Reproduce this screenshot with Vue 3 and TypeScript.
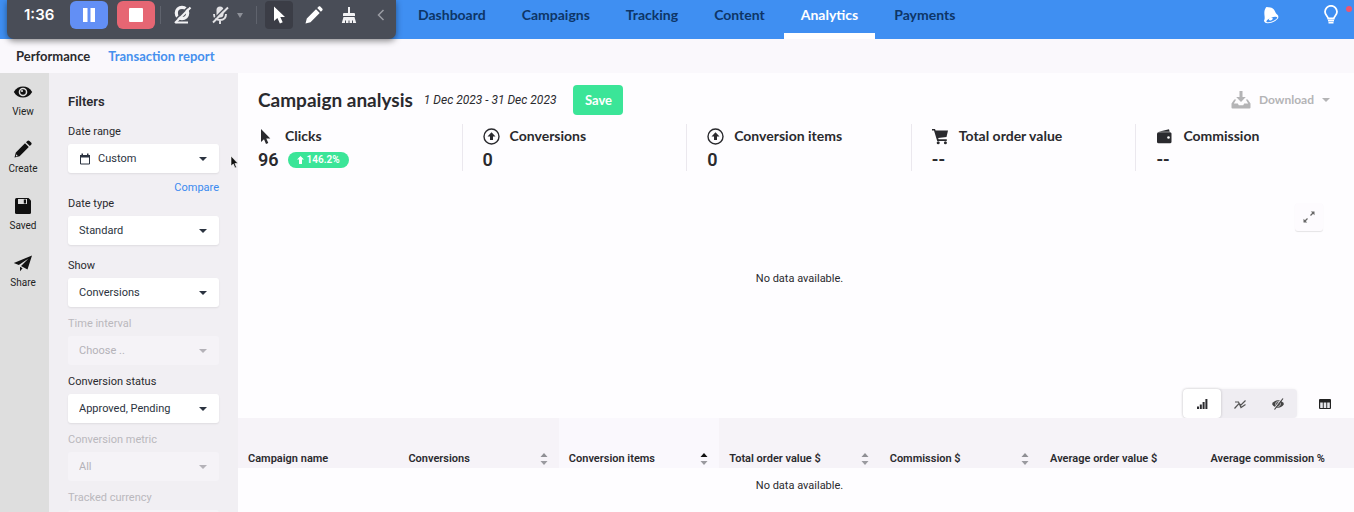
<script setup lang="ts">
import { ref } from 'vue'

interface Filter {
  id: string
  label: string
  value: string
  disabled?: boolean
  calendar?: boolean
  compare?: boolean
  roomy?: boolean
}

const navItems = ['Dashboard', 'Campaigns', 'Tracking', 'Content', 'Analytics', 'Payments']
const activeNav = 'Analytics'

const railItems = [
  { label: 'View', icon: 'eye' },
  { label: 'Create', icon: 'pencil' },
  { label: 'Saved', icon: 'disk' },
  { label: 'Share', icon: 'plane' },
]

const filters: Filter[] = [
  { id: 'date-range', label: 'Date range', value: 'Custom', calendar: true, compare: true },
  { id: 'date-type', label: 'Date type', value: 'Standard', roomy: true },
  { id: 'show', label: 'Show', value: 'Conversions' },
  { id: 'interval', label: 'Time interval', value: 'Choose ..', disabled: true },
  { id: 'status', label: 'Conversion status', value: 'Approved, Pending' },
  { id: 'metric', label: 'Conversion metric', value: 'All', disabled: true },
  { id: 'currency', label: 'Tracked currency', value: 'All', disabled: true },
]

const stats = [
  { label: 'Clicks', value: '96', change: '146.2%', icon: 'cursor' },
  { label: 'Conversions', value: '0', icon: 'up' },
  { label: 'Conversion items', value: '0', icon: 'up' },
  { label: 'Total order value', value: '--', icon: 'cart' },
  { label: 'Commission', value: '--', icon: 'wallet' },
]

const columns = [
  { label: 'Campaign name' },
  { label: 'Conversions', sortable: true },
  { label: 'Conversion items', sortable: true, sorted: true },
  { label: 'Total order value $', sortable: true },
  { label: 'Commission $', sortable: true },
  { label: 'Average order value $' },
  { label: 'Average commission %' },
]

const chartModes = ['bars', 'lines', 'hidden']
const chartMode = ref('bars')
</script>

<template>
  <div class="app">
    <header class="topbar">
      <nav class="nav" aria-label="Main">
        <a
          v-for="item in navItems"
          :key="item"
          href="#"
          class="nav-link"
          :class="{ active: item === activeNav }"
        >{{ item }}</a>
      </nav>
      <div class="top-actions">
        <button type="button" class="plain" aria-label="Notifications">
          <svg width="18" height="18" viewBox="0 0 18 18">
            <path d="M3.500 2.200C4 .8 5 .6 5.800 1.300c3-.4 5.700 1 7 3.800.8 1.800 1.600 3.200 3.600 4.400L2 15.200c.9-2 .7-3.700.5-5.700-.3-2.700-.3-5 1-7.300z" fill="#fff" />
            <ellipse cx="9.300" cy="13" rx="7.500" ry="3.600" transform="rotate(-22 9.300 13)" fill="#fff" />
            <ellipse cx="9.800" cy="13.500" rx="5.800" ry="1.900" transform="rotate(-22 9.800 13.500)" fill="#3f8ff2" />
            <ellipse cx="8.800" cy="13" rx="2" ry="1.300" transform="rotate(-22 8.800 13)" fill="#fff" />
          </svg>
        </button>
        <button type="button" class="plain tips" aria-label="Tips">
          <svg width="16" height="20" viewBox="0 0 16 20">
            <path d="M5.200 13.500C5 11.400 2 10 2 6.800a6 6 0 0 1 12 0c0 3.200-3 4.600-3.200 6.700z" fill="none" stroke="#fff" stroke-width="1.800" />
            <path d="M5 15.600h6M5.500 17.800h5" stroke="#fff" stroke-width="1.600" />
          </svg>
          <span class="dot"></span>
        </button>
      </div>
    </header>

    <nav class="subnav" aria-label="Reports">
      <a href="#" class="sub-link">Performance</a>
      <a href="#" class="sub-link current">Transaction report</a>
    </nav>

    <div class="body">
      <aside class="rail">
        <button v-for="item in railItems" :key="item.label" type="button" class="rail-item">
          <svg width="20" height="20" viewBox="0 0 20 20">
            <template v-if="item.icon === 'eye'">
              <path d="M.8 10C3 6.300 6.300 4.500 10 4.500S17 6.300 19.200 10C17 13.700 13.700 15.500 10 15.500S3 13.700.8 10z" fill="#111" />
              <circle cx="10" cy="10" r="4.300" fill="#dedede" />
              <circle cx="10" cy="10" r="2.800" fill="#111" />
              <circle cx="9" cy="9" r="1.100" fill="#dedede" />
            </template>
            <template v-else-if="item.icon === 'pencil'">
              <path d="M1.500 18.500l1.300-5.100L12 4.200l3.800 3.800-9.200 9.200zM13 3.200l1.300-1.300c.7-.7 1.500-.7 2.200 0l1.600 1.600c.7.7.7 1.500 0 2.200L16.800 7z" fill="#111" />
              <path d="M3.200 15.300l1.600 1.600-2 .6z" fill="#dedede" />
            </template>
            <template v-else-if="item.icon === 'disk'">
              <path d="M3.500 2h12L18 4.500v12a1.500 1.500 0 0 1-1.500 1.500h-13A1.500 1.500 0 0 1 2 16.500v-13A1.500 1.500 0 0 1 3.500 2z" fill="#111" />
              <path d="M5 3h9v5H5z" fill="#dedede" />
              <path d="M10.800 3.500h2.200v4h-2.200z" fill="#111" />
            </template>
            <template v-else>
              <path d="M19 2.500L.8 10l5 2.100L15.500 5.500 8 13l6.500 3.500zM7 13.800v4.400l2.600-3z" fill="#111" />
            </template>
          </svg>
          <span>{{ item.label }}</span>
        </button>
      </aside>

      <form class="filters" @submit.prevent>
        <h2 class="filters-title">Filters</h2>
        <div
          v-for="f in filters"
          :key="f.id"
          class="field"
          :class="{ disabled: f.disabled, roomy: f.roomy, comparable: f.compare }"
        >
          <label :for="f.id">{{ f.label }}</label>
          <div class="select">
            <svg v-if="f.calendar" class="calendar" width="12" height="12" viewBox="0 0 12 12">
              <path d="M1.500 2.500h9v8.500h-9z" fill="none" stroke="#2b3340" />
              <path d="M1 2h10v2.500H1zM2.500.5h1.500v2H2.500zM8 .5h1.500v2H8z" fill="#2b3340" />
            </svg>
            <select :id="f.id" :disabled="f.disabled" :class="{ indented: f.calendar }">
              <option>{{ f.value }}</option>
            </select>
            <span class="caret"></span>
          </div>
          <a v-if="f.compare" href="#" class="compare">Compare</a>
        </div>
      </form>

      <main class="main">
        <div class="title-row">
          <h1>Campaign analysis</h1>
          <span class="dates">1 Dec 2023 - 31 Dec 2023</span>
          <button type="button" class="save">Save</button>
          <button type="button" class="download">
            <svg width="20" height="18" viewBox="0 0 20 18" fill="#b4b4b6">
              <path d="M8.500 0h3v6h3.300L10 11 5.200 6h3.300z" />
              <path d="M3.300 8.500h1.900L2.800 12.500h4l1 1.700h4.400l1-1.700h4L14.800 8.500h1.900l2.800 4v4a1 1 0 0 1-1 1h-17a1 1 0 0 1-1-1v-4z" />
            </svg>
            <span>Download</span>
            <span class="caret"></span>
          </button>
        </div>

        <div class="stats">
          <section v-for="s in stats" :key="s.label" class="stat">
            <div class="stat-head">
              <svg width="17" height="18" viewBox="0 0 17 18">
                <path v-if="s.icon === 'cursor'" d="M3 2v13l3-2.800 2 4.800 2.300-1-2-4.500h4z" fill="#2a2a2e" />
                <template v-else-if="s.icon === 'up'">
                  <circle cx="8.500" cy="9.500" r="7.500" fill="none" stroke="#2a2a2e" stroke-width="1.400" />
                  <path d="M8.500 5.300l4 4.200H10v3.500H7V9.500H4.500z" fill="#2a2a2e" />
                </template>
                <template v-else-if="s.icon === 'cart'">
                  <path d="M0 2h3l.6 1.600H16L14.500 10l-8.300 1 .4 1.300h8.200V14H5.200L2 3.600H0z" fill="#2a2a2e" />
                  <circle cx="6.200" cy="15.800" r="1.500" fill="#2a2a2e" />
                  <circle cx="13.400" cy="15.800" r="1.500" fill="#2a2a2e" />
                </template>
                <template v-else>
                  <path d="M2.500 4.700L13 2.200l.7 2.500z" fill="#2a2a2e" />
                  <rect x="1" y="5.300" width="14.500" height="11" rx="1.500" fill="#2a2a2e" />
                  <circle cx="12.500" cy="10.500" r="1.300" fill="#fff" />
                </template>
              </svg>
              <h3>{{ s.label }}</h3>
            </div>
            <div class="stat-value">
              <strong>{{ s.value }}</strong>
              <span v-if="s.change" class="badge">
                <svg width="7" height="8" viewBox="0 0 7 8"><path d="M3.500 0L7 3.500H5V8H2V3.500H0z" fill="#fff" /></svg>
                {{ s.change }}
              </span>
            </div>
          </section>
        </div>

        <section class="chart">
          <button type="button" class="expand" aria-label="Expand chart">
            <svg width="14" height="14" viewBox="0 0 14 14" stroke="#666" fill="#666" stroke-width="1.300">
              <path d="M8.500 5.500L11 3M5.500 8.500L3 11" />
              <path d="M8.800 1.500h3.700v3.700zM5.200 12.500H1.500V8.800z" stroke="none" />
            </svg>
          </button>
          <p class="no-data">No data available.</p>
          <div class="views">
            <div class="segment" role="group" aria-label="Chart type">
              <button
                v-for="mode in chartModes"
                :key="mode"
                type="button"
                :aria-label="mode"
                :class="{ on: chartMode === mode }"
                @click="chartMode = mode"
              >
                <svg width="14" height="14" viewBox="0 0 14 14">
                  <path v-if="mode === 'bars'" d="M2 9.500h2V12H2zM4.800 7.500h2V12h-2zM7.600 5h2v7h-2zM10.400 2h2v10h-2z" fill="#2a2a2e" />
                  <path v-else-if="mode === 'lines'" d="M1.500 11.500L6 6.500l2 1.500 4.500-4.500M2 5h3.500L8 10.500l4.500-3" fill="none" stroke="#555" stroke-width="1.200" />
                  <template v-else>
                    <path d="M1 7c1.500-2.500 3.600-3.700 6-3.700S11.500 4.500 13 7c-1.500 2.500-3.600 3.700-6 3.700S2.500 9.500 1 7z" fill="#444" />
                    <circle cx="7" cy="7" r="2.400" fill="none" stroke="#efedf2" stroke-width=".7" />
                    <path d="M2.500 12.500L11 1.500" stroke="#efedf2" stroke-width="1.200" />
                    <path d="M3.500 12.500L12 1.500" stroke="#444" stroke-width="1.200" />
                  </template>
                </svg>
              </button>
            </div>
            <button type="button" class="table-toggle" aria-label="Table settings">
              <svg width="14" height="12" viewBox="0 0 14 12">
                <rect x="1" y="1" width="12" height="10" rx="1" fill="#222" />
                <path d="M2.200 4.500h2.600V10H2.200zM5.700 4.500h2.600V10H5.700zM9.200 4.500h2.600V10H9.200z" fill="#e8e8ec" />
              </svg>
            </button>
          </div>
        </section>

        <table class="report">
          <thead>
            <tr>
              <th v-for="c in columns" :key="c.label" scope="col" :class="{ sorted: c.sorted }">
                <div class="th">
                  <span>{{ c.label }}</span>
                  <svg v-if="c.sortable" width="8" height="12" viewBox="0 0 8 12">
                    <path d="M4 0l3.500 4h-7z" :fill="c.sorted ? '#111' : '#8f8f94'" />
                    <path d="M4 12L.5 8h7z" fill="#9a9a9f" />
                  </svg>
                </div>
              </th>
            </tr>
          </thead>
          <tbody>
            <tr>
              <td :colspan="columns.length">No data available.</td>
            </tr>
          </tbody>
        </table>
      </main>
    </div>

    <div class="recorder" role="toolbar" aria-label="Recording">
      <span class="time">1:36</span>
      <button type="button" class="rec pause" aria-label="Pause">
        <svg width="14" height="14" viewBox="0 0 14 14"><path d="M1 0h4.500v14H1zM8.500 0H13v14H8.500z" fill="#fff" /></svg>
      </button>
      <button type="button" class="rec stop" aria-label="Stop">
        <svg width="14" height="14" viewBox="0 0 14 14"><rect width="14" height="14" rx="1" fill="#fff" /></svg>
      </button>
      <span class="rule first"></span>
      <button type="button" class="tool" aria-label="Camera off">
        <svg width="20" height="20" viewBox="0 0 20 20" fill="none" stroke="#f2f2f4">
          <circle cx="10" cy="8" r="5.700" stroke-width="3.200" />
          <path d="M4 17.500h12" stroke-width="2" />
          <path d="M1.500 16.500l15-15" stroke="#494d57" stroke-width="1.600" />
          <path d="M3 18L18.500 2.500" stroke-width="2.200" />
        </svg>
      </button>
      <button type="button" class="tool mic" aria-label="Microphone off">
        <svg width="20" height="20" viewBox="0 0 20 20" fill="none" stroke="#e2e2e5">
          <rect x="6.500" y="1.500" width="7" height="11" rx="3.500" fill="#e2e2e5" stroke="none" />
          <path d="M4 9c0 4 2.500 6 6 6s6-2 6-6M10 15v4" stroke-width="1.900" />
          <path d="M2 16L16.500 1.500" stroke="#494d57" stroke-width="1.600" />
          <path d="M3 17.500L18 2.500" stroke-width="1.900" />
        </svg>
      </button>
      <span class="caret mic-caret"></span>
      <span class="rule second"></span>
      <button type="button" class="tool pointer" aria-label="Pointer">
        <svg width="18" height="20" viewBox="0 0 18 20"><path d="M4 1.500v14.500l3.400-3 2.500 5.500 2.800-1.200-2.400-5.400H15z" fill="#fff" /></svg>
      </button>
      <button type="button" class="tool" aria-label="Draw">
        <svg width="20" height="20" viewBox="0 0 20 20"><path d="M1.500 18.500l1.300-5L12 4.300l3.700 3.700-9.200 9.200zM13.200 3.100l1.300-1.300c.6-.6 1.400-.6 2 0l1.700 1.700c.6.6.6 1.400 0 2l-1.300 1.300z" fill="#fff" /></svg>
      </button>
      <button type="button" class="tool" aria-label="Clear">
        <svg width="16" height="20" viewBox="0 0 16 20" fill="#f2f2f4">
          <path d="M7 2h2v6h4a1 1 0 0 1 1 1v2H2V9a1 1 0 0 1 1-1h4z" />
          <path d="M2.500 12h11l1.700 6H.8z" />
          <path d="M4.500 18.500v-3M8 18.500v-3M11.500 18.500v-3" stroke="#494d57" />
        </svg>
      </button>
      <button type="button" class="tool collapse" aria-label="Collapse">
        <svg width="8" height="12" viewBox="0 0 8 12"><path d="M6.500 1L1.500 6l5 5" fill="none" stroke="#9b9da4" stroke-width="1.500" /></svg>
      </button>
    </div>

    <svg class="mouse" width="9" height="14" viewBox="0 0 9 14">
      <path d="M1 1v10l2.300-2 1.700 4 1.500-.7-1.600-3.800H8z" fill="#111" stroke="#fff" stroke-width=".6" />
    </svg>
  </div>
</template>

<style>
body {
  margin: 0;
  overflow: hidden;
}
</style>

<style scoped>
.app {
  position: relative;
  display: flex;
  flex-direction: column;
  height: 100vh;
  overflow: hidden;
  background: #fefdff;
  color: #2a2a2e;
  font-family: Roboto, "Liberation Sans", sans-serif;
  font-size: 11px;
  line-height: 16px;
  white-space: nowrap;
}

button {
  display: flex;
  align-items: center;
  justify-content: center;
  padding: 0;
  border: 0;
  background: none;
  color: inherit;
  font: inherit;
}

svg {
  flex: none;
}

a {
  text-decoration: none;
}

h1,
h2,
h3,
p {
  margin: 0;
}

.caret {
  width: 0;
  height: 0;
  border: 4px solid transparent;
  border-width: 4px 4px 0;
  border-top-color: currentColor;
}

.topbar {
  display: flex;
  flex: none;
  justify-content: space-between;
  height: 39px;
  padding: 0 15px 0 401px;
  background: #3f8ff2;
}

.nav {
  display: flex;
  gap: 2px;
}

.nav-link {
  padding: 7px 17px 10px;
  border-bottom: 6px solid transparent;
  color: #0d3567;
  font-family: Lato, sans-serif;
  font-size: 14px;
  font-weight: 700;
}

.nav-link.active {
  border-color: #fff;
  color: #fff;
}

.top-actions {
  display: flex;
  gap: 43px;
  height: 29px;
}

.tips {
  position: relative;
}

.dot {
  position: absolute;
  top: 6px;
  right: -13px;
  width: 6px;
  height: 6px;
  border-radius: 50%;
  background: #ee5570;
}

.subnav {
  display: flex;
  flex: none;
  gap: 18px;
  align-items: center;
  height: 34px;
  padding-left: 16px;
  background: #faf8fc;
}

.sub-link {
  color: #2a2a2e;
  font-family: Lato, sans-serif;
  font-size: 13px;
  font-weight: 700;
}

.sub-link.current {
  color: #4690ee;
}

.body {
  display: flex;
  flex: 1;
  min-height: 0;
}

.rail {
  display: flex;
  flex: none;
  flex-direction: column;
  gap: 20px;
  width: 49px;
  padding-top: 9px;
  background: #dedede;
}

.rail-item {
  flex-direction: column;
  gap: 3px;
  width: 46px;
  color: #222;
  font-size: 10px;
  line-height: 14px;
}

.filters {
  box-sizing: border-box;
  flex: none;
  width: 189px;
  padding: 21px 19px 0;
  overflow: hidden;
  background: #f1eff3;
}

.filters-title {
  margin-bottom: 14px;
  font-size: 13px;
  font-weight: 600;
}

.field {
  margin-bottom: 9px;
}

.field.comparable {
  margin-bottom: 0;
}

.field.roomy {
  margin-bottom: 13px;
}

.field label {
  display: block;
  margin-bottom: 4px;
}

.select {
  display: grid;
  align-items: center;
  border-radius: 3px;
  background: #fff;
  box-shadow: 0 1px 2px rgba(0, 0, 0, 0.08);
  color: #2b3340;
}

.select > * {
  grid-area: 1 / 1;
}

.select select {
  width: 100%;
  height: 29px;
  padding: 0 28px 0 11px;
  border: 0;
  background: none;
  color: inherit;
  font: inherit;
  opacity: 1;
  appearance: none;
}

.select select.indented {
  padding-left: 30px;
}

.select .calendar {
  margin-left: 11px;
}

.select .caret {
  justify-self: end;
  margin-right: 12px;
  pointer-events: none;
}

.field.disabled {
  color: #bab8bd;
}

.field.disabled .select {
  background: #f5f3f7;
  box-shadow: none;
  color: #b4b2b8;
}

.compare {
  display: block;
  margin-top: 7px;
  color: #3a8af0;
  text-align: right;
}

.main {
  display: flex;
  flex: 1;
  flex-direction: column;
  min-width: 0;
  margin-right: -7px;
}

.title-row {
  display: flex;
  align-items: center;
  padding: 12px 31px 0 20px;
}

.title-row h1 {
  font-family: Lato, sans-serif;
  font-size: 19px;
  font-weight: 700;
  line-height: 24px;
}

.dates {
  margin: 0 17px 0 11px;
  font-size: 12px;
  font-style: italic;
}

.save {
  width: 50px;
  height: 30px;
  border-radius: 4px;
  background: #3be598;
  color: #fff;
  font-family: Lato, sans-serif;
  font-size: 13px;
  font-weight: 700;
}

.download {
  gap: 8px;
  margin-left: auto;
  color: #b4b4b6;
  font-family: Lato, sans-serif;
  font-size: 12px;
  font-weight: 700;
}

.stats {
  display: grid;
  grid-template-columns: repeat(5, 1fr);
  margin-top: 9px;
}

.stat {
  height: 47px;
  padding-left: 20px;
  border-right: 1px solid #ebe8ee;
}

.stat-head {
  display: flex;
  gap: 10px;
  align-items: center;
  height: 24px;
}

.stat-head h3 {
  font-family: Lato, sans-serif;
  font-size: 14px;
  font-weight: 700;
}

.stat-value {
  display: flex;
  gap: 9px;
  align-items: center;
  height: 24px;
}

.stat-value strong {
  font-size: 18px;
  font-weight: 600;
}

.badge {
  display: flex;
  gap: 3px;
  align-items: center;
  padding: 0 9px;
  border-radius: 8px;
  background: #3be598;
  color: #fff;
  font-size: 10px;
  font-weight: 600;
}

.chart {
  display: flex;
  flex-direction: column;
  padding-top: 32px;
}

.expand {
  align-self: flex-end;
  width: 28px;
  height: 28px;
  margin-right: 38px;
  border-radius: 3px;
  background: #fdfbfe;
  box-shadow: 0 1px 1px rgba(0, 0, 0, 0.1);
}

.no-data {
  margin: 40px 0 102px;
  text-align: center;
}

.views {
  display: flex;
  gap: 14px;
  align-self: flex-end;
  margin-right: 22px;
}

.segment {
  display: flex;
  border-radius: 4px;
  background: #efedf2;
  box-shadow: 0 0 3px rgba(0, 0, 0, 0.06);
}

.segment button {
  width: 38px;
  height: 29px;
  border-radius: 4px;
}

.segment button.on {
  background: #fff;
  box-shadow: 0 0 3px rgba(0, 0, 0, 0.2);
}

.table-toggle {
  width: 28px;
  height: 29px;
}

.report {
  width: 100%;
  border-collapse: collapse;
  table-layout: fixed;
}

.report th {
  height: 49px;
  padding: 0 11px 1px 10px;
  background: #f6f3f8;
  font-size: 11px;
  font-weight: 600;
  text-align: left;
  vertical-align: bottom;
}

.report th.sorted {
  background: #faf8fd;
}

.th {
  display: flex;
  align-items: center;
  justify-content: space-between;
}

.report td {
  height: 36px;
  padding: 0;
  text-align: center;
}

.recorder {
  position: absolute;
  top: 0;
  left: 7px;
  display: flex;
  align-items: center;
  box-sizing: border-box;
  height: 39px;
  padding: 0 7px 9px 17px;
  border-radius: 0 0 7px 7px;
  background: #494d57;
  box-shadow: 0 2px 6px rgba(0, 0, 0, 0.45);
}

.time {
  width: 46px;
  color: #fff;
  font-family: Inter, sans-serif;
  font-size: 15px;
  font-weight: 600;
}

.rec {
  width: 38px;
  height: 28px;
  margin-right: 9px;
  border-radius: 6px;
}

.pause {
  background: #628ff5;
}

.stop {
  margin-right: 5px;
  background: #e66673;
}

.rule {
  width: 1px;
  height: 18px;
  background: #5f636d;
}

.rule.first {
  margin-right: 7px;
}

.rule.second {
  margin: 0 8px 0 13px;
}

.tool {
  width: 28px;
  height: 28px;
  margin-right: 7px;
  border-radius: 4px;
}

.tool.mic {
  margin: 0 3px 0 3px;
}

.mic-caret {
  border-width: 5px 3px 0;
  color: #8d9098;
}

.tool.pointer {
  background: #3b3d46;
}

.tool.collapse {
  width: 16px;
  margin: 0 0 0 3px;
}

.mouse {
  position: absolute;
  top: 155px;
  left: 230px;
}
</style>
